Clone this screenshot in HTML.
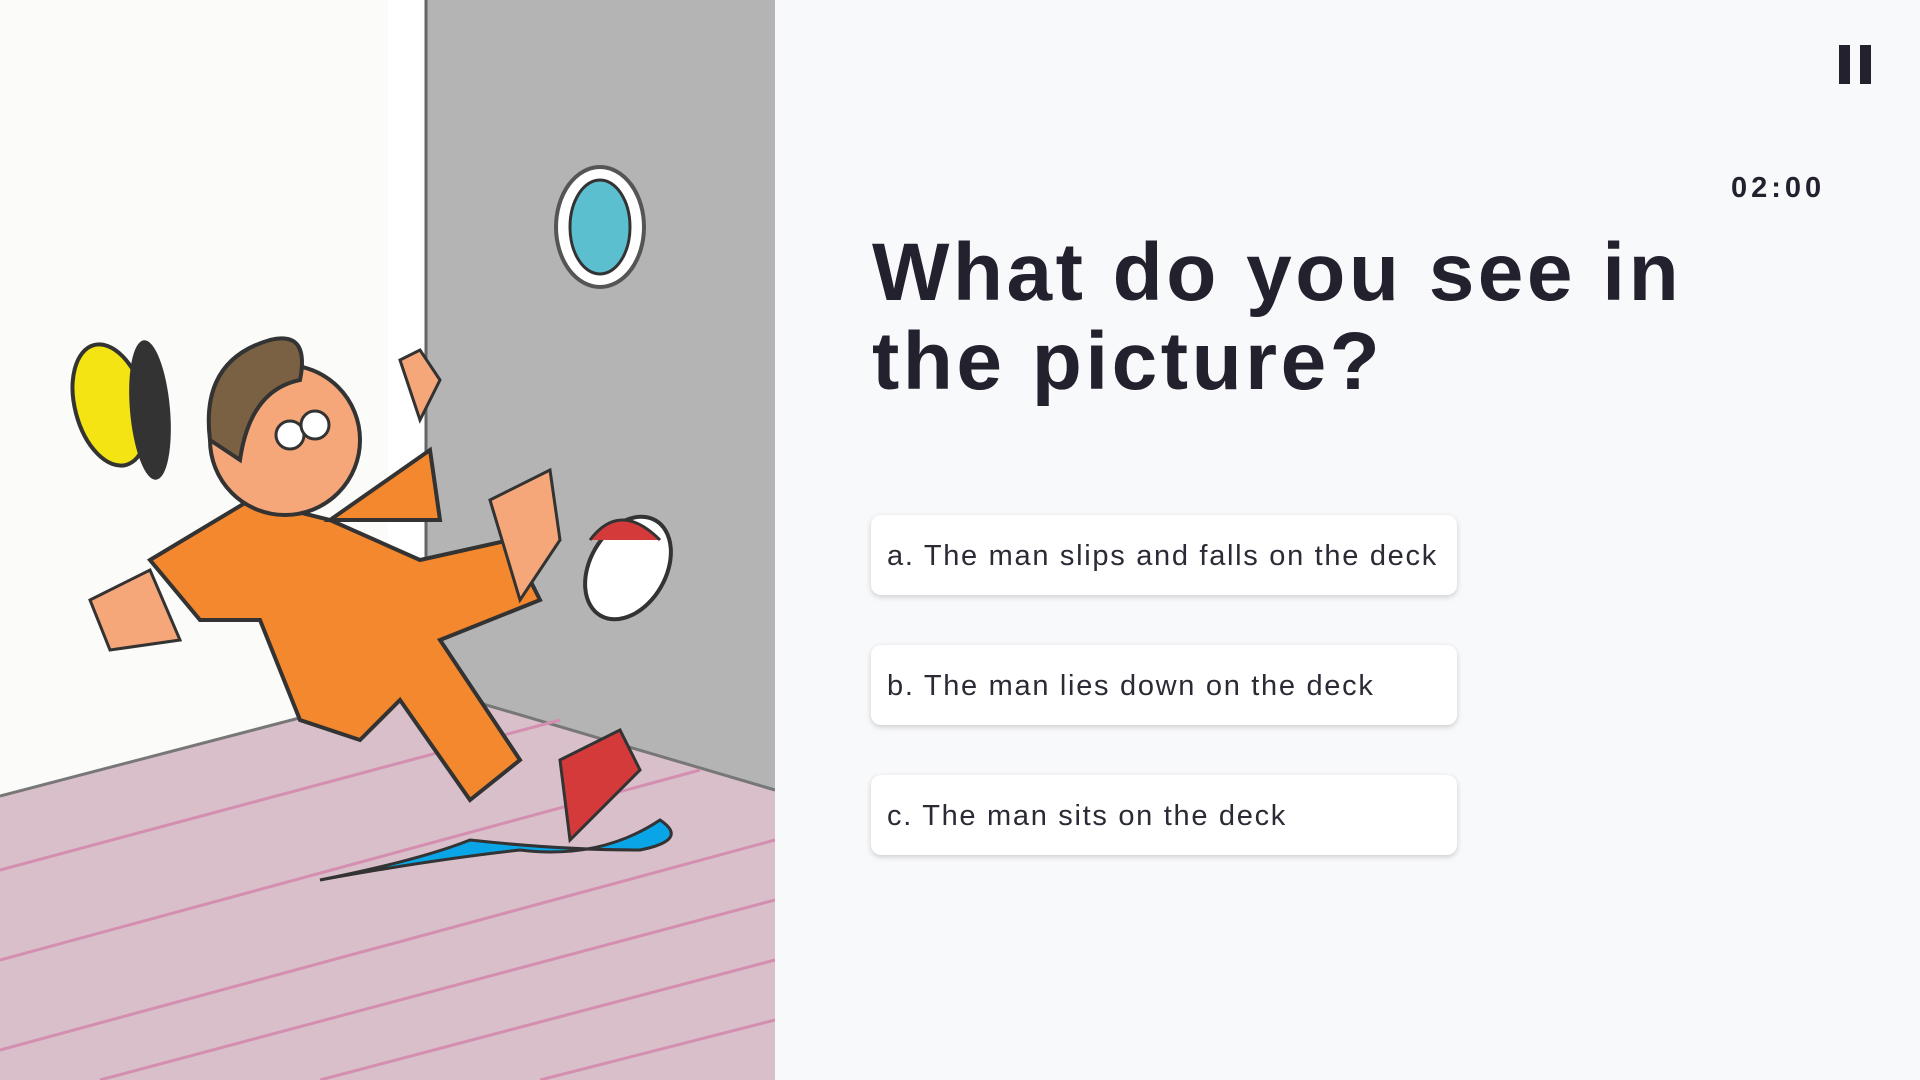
<!DOCTYPE html>
<html><head><meta charset="utf-8"><style>
html,body{margin:0;padding:0;width:1920px;height:1080px;overflow:hidden;background:#f8f9fb;font-family:"Liberation Sans",sans-serif;}
.left{position:absolute;left:0;top:0;width:775px;height:1080px;overflow:hidden;background:#fbfbf9}
.title{position:absolute;left:872px;top:228px;font-size:82px;font-weight:bold;color:#23212e;line-height:89px;letter-spacing:3.5px}
.opt{position:absolute;left:871px;width:586px;height:80px;background:#fff;border-radius:10px;box-shadow:0 2px 6px rgba(0,0,0,0.18);font-size:29px;color:#2b2a35;line-height:82px;padding-left:16px;box-sizing:border-box;font-weight:300;letter-spacing:1.7px}
.timer{position:absolute;left:1731px;top:172px;font-size:29px;font-weight:bold;color:#23212e;letter-spacing:4px}
.bar{position:absolute;top:45px;width:11px;height:39px;background:#23212e}
</style></head><body>
<div class="left">
<svg width="775" height="1080" viewBox="0 0 775 1080">
<rect x="0" y="0" width="388" height="780" fill="#fbfbf9"/>
<rect x="388" y="0" width="40" height="780" fill="#fff"/>
<rect x="426" y="0" width="349" height="800" fill="#b4b4b4"/>
<line x1="426" y1="0" x2="426" y2="690" stroke="#666" stroke-width="3"/>
<polygon points="0,796 422,686 775,790 775,1080 0,1080" fill="#d9bfca"/>
<polyline points="0,796 422,686 775,790" fill="none" stroke="#777" stroke-width="3"/>
<g stroke="#d48fb0" stroke-width="3">
<line x1="0" y1="870" x2="560" y2="720"/><line x1="0" y1="960" x2="700" y2="770"/><line x1="0" y1="1050" x2="775" y2="840"/><line x1="100" y1="1080" x2="775" y2="900"/><line x1="320" y1="1080" x2="775" y2="960"/><line x1="540" y1="1080" x2="775" y2="1020"/>
</g>
<ellipse cx="600" cy="227" rx="44" ry="60" fill="#fff" stroke="#555" stroke-width="4"/>
<ellipse cx="600" cy="227" rx="30" ry="47" fill="#5bbfcf" stroke="#333" stroke-width="3"/>
<path d="M320 880 Q420 860 470 840 Q560 850 640 850 Q690 840 660 820 Q600 860 520 850 Q430 860 320 880Z" fill="#0aa5e6" stroke="#333" stroke-width="3"/>
<ellipse cx="110" cy="405" rx="35" ry="62" fill="#f5e414" stroke="#333" stroke-width="4" transform="rotate(-15 110 405)"/>
<ellipse cx="150" cy="410" rx="20" ry="70" fill="#333" transform="rotate(-5 150 410)"/>
<path d="M150 560 L250 500 L330 520 L420 560 L510 540 L540 600 L440 640 L520 760 L470 800 L400 700 L360 740 L300 720 L260 620 L200 620 Z" fill="#f4882e" stroke="#333" stroke-width="4"/>
<path d="M330 520 L430 450 L440 520 Z" fill="#f4882e" stroke="#333" stroke-width="4"/>
<circle cx="285" cy="440" r="75" fill="#f6a77a" stroke="#333" stroke-width="4"/>
<path d="M210 440 Q200 360 270 340 Q310 330 300 380 Q250 390 240 460 Z" fill="#7a6143" stroke="#333" stroke-width="4"/>
<circle cx="290" cy="435" r="14" fill="#fff" stroke="#333" stroke-width="3"/><circle cx="315" cy="425" r="14" fill="#fff" stroke="#333" stroke-width="3"/>
<path d="M400 360 L420 420 L440 380 L420 350Z" fill="#f6a77a" stroke="#333" stroke-width="3"/>
<path d="M90 600 L150 570 L180 640 L110 650Z" fill="#f6a77a" stroke="#333" stroke-width="3"/>
<path d="M490 500 L550 470 L560 540 L520 600 Z" fill="#f6a77a" stroke="#333" stroke-width="3"/>
<ellipse cx="628" cy="568" rx="38" ry="55" fill="#fff" stroke="#333" stroke-width="4" transform="rotate(30 628 568)"/>
<path d="M590 540 Q620 500 660 540" fill="#d43a3a" stroke="#333" stroke-width="3"/>
<path d="M560 760 L620 730 L640 770 L570 840 Z" fill="#d43a3a" stroke="#333" stroke-width="3"/>
</svg>
</div>
<div class="bar" style="left:1839px"></div><div class="bar" style="left:1860px"></div>
<div class="timer">02:00</div>
<div class="title">What do you see in<br>the picture?</div>
<div class="opt" style="top:515px">a. The man slips and falls on the deck</div>
<div class="opt" style="top:645px">b. The man lies down on the deck</div>
<div class="opt" style="top:775px">c. The man sits on the deck</div>
</body></html>
